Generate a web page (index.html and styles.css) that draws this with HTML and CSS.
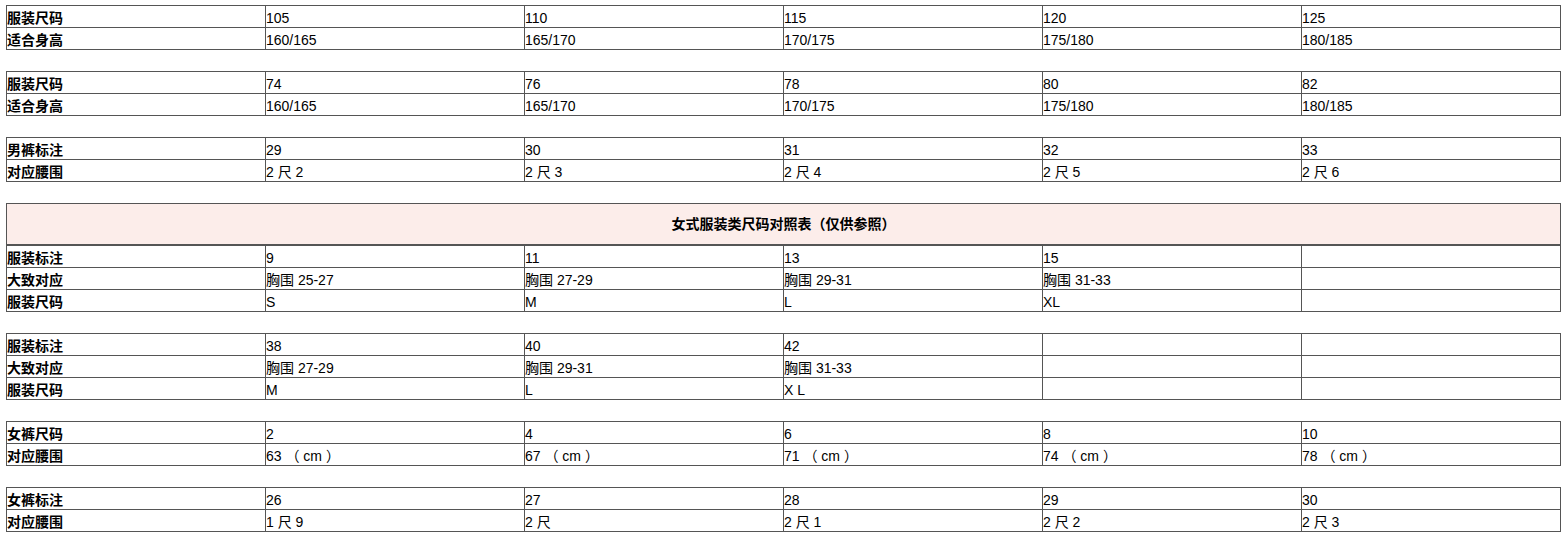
FILE: index.html
```html
<!DOCTYPE html>
<html lang="zh-CN">
<head>
<meta charset="utf-8">
<title>尺码对照表</title>
<link rel="stylesheet" href="styles.css">
</head>
<body>
<div class="page">
  <table class="size">
    <tr><td class="lbl">服装尺码</td><td>105</td><td>110</td><td>115</td><td>120</td><td>125</td></tr>
    <tr><td class="lbl">适合身高</td><td>160/165</td><td>165/170</td><td>170/175</td><td>175/180</td><td>180/185</td></tr>
  </table>
  <table class="size">
    <tr><td class="lbl">服装尺码</td><td>74</td><td>76</td><td>78</td><td>80</td><td>82</td></tr>
    <tr><td class="lbl">适合身高</td><td>160/165</td><td>165/170</td><td>170/175</td><td>175/180</td><td>180/185</td></tr>
  </table>
  <table class="size">
    <tr><td class="lbl">男裤标注</td><td>29</td><td>30</td><td>31</td><td>32</td><td>33</td></tr>
    <tr><td class="lbl">对应腰围</td><td>2 尺 2</td><td>2 尺 3</td><td>2 尺 4</td><td>2 尺 5</td><td>2 尺 6</td></tr>
  </table>
  <table class="size">
    <tr><th class="head" colspan="6">女式服装类尺码对照表（仅供参照）</th></tr>
    <tr><td class="lbl">服装标注</td><td>9</td><td>11</td><td>13</td><td>15</td><td>&nbsp;</td></tr>
    <tr><td class="lbl">大致对应</td><td>胸围 25-27</td><td>胸围 27-29</td><td>胸围 29-31</td><td>胸围 31-33</td><td>&nbsp;</td></tr>
    <tr><td class="lbl">服装尺码</td><td>S</td><td>M</td><td>L</td><td>XL</td><td>&nbsp;</td></tr>
  </table>
  <table class="size">
    <tr><td class="lbl">服装标注</td><td>38</td><td>40</td><td>42</td><td>&nbsp;</td><td>&nbsp;</td></tr>
    <tr><td class="lbl">大致对应</td><td>胸围 27-29</td><td>胸围 29-31</td><td>胸围 31-33</td><td>&nbsp;</td><td>&nbsp;</td></tr>
    <tr><td class="lbl">服装尺码</td><td>M</td><td>L</td><td>X L</td><td>&nbsp;</td><td>&nbsp;</td></tr>
  </table>
  <table class="size">
    <tr><td class="lbl">女裤尺码</td><td>2</td><td>4</td><td>6</td><td>8</td><td>10</td></tr>
    <tr><td class="lbl">对应腰围</td><td>63 （ cm ）</td><td>67 （ cm ）</td><td>71 （ cm ）</td><td>74 （ cm ）</td><td>78 （ cm ）</td></tr>
  </table>
  <table class="size">
    <tr><td class="lbl">女裤标注</td><td>26</td><td>27</td><td>28</td><td>29</td><td>30</td></tr>
    <tr><td class="lbl">对应腰围</td><td>1 尺 9</td><td>2 尺</td><td>2 尺 1</td><td>2 尺 2</td><td>2 尺 3</td></tr>
  </table>
</div>
</body>
</html>
```

FILE: styles.css
```css
html, body {
  margin: 0;
  padding: 0;
  background: #ffffff;
}

.page {
  padding: 5px 6px 0 6px;
  font-family: "Liberation Sans", Arial, "Noto Sans CJK SC", sans-serif;
  font-size: 14px;
  color: #000;
}

.size {
  width: 100%;
  table-layout: fixed;
  border-collapse: collapse;
  border: 1px solid #555;
  margin: 0 0 21px 0;
}

.size td {
  border: 1px solid #555;
  padding: 0 0 1px 0;
  height: 22px;
  line-height: 16px;
  vertical-align: bottom;
  box-sizing: border-box;
  text-align: left;
  white-space: nowrap;
  overflow: hidden;
}

.size td.lbl {
  font-weight: bold;
}

.size th.head {
  background: #fcedea;
  border: 1px solid #555;
  border-bottom: 2px solid #555;
  height: 40px;
  padding: 0;
  font-weight: bold;
  text-align: center;
  vertical-align: middle;
  line-height: 16px;
}
```
